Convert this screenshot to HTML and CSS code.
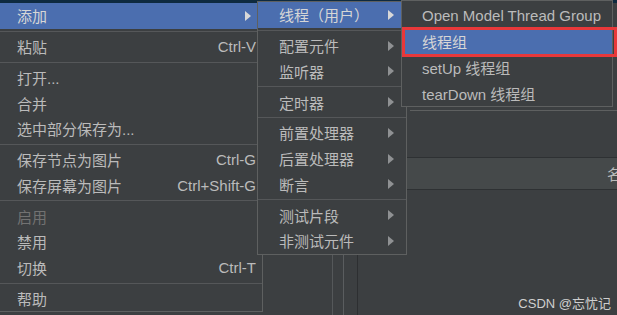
FILE: index.html
```html
<!DOCTYPE html>
<html lang="zh-CN">
<head>
    <meta charset="UTF-8">
    <title>JMeter 右键菜单</title>
    <link rel="stylesheet" href="styles.css">
</head>
<body>
    <div class="desktop">
        <div class="title-strip"><span>Test Plan</span></div>
        <div class="panes">
            <div class="tree-pane"></div>
            <div class="divider"></div>
            <div class="gutter"></div>
            <div class="editor">
                <div class="form-box"></div>
                <div class="name-band"><span>名称：</span></div>
            </div>
        </div>

        <!-- main context menu -->
        <div class="menu menu-main">
            <div class="item active"><span class="label">添加</span><span class="arrow"></span></div>
            <div class="sep"></div>
            <div class="item"><span class="label">粘贴</span><span class="shortcut">Ctrl-V</span></div>
            <div class="sep"></div>
            <div class="item"><span class="label">打开...</span></div>
            <div class="item"><span class="label">合并</span></div>
            <div class="item"><span class="label">选中部分保存为...</span></div>
            <div class="sep"></div>
            <div class="item"><span class="label">保存节点为图片</span><span class="shortcut">Ctrl-G</span></div>
            <div class="item"><span class="label">保存屏幕为图片</span><span class="shortcut">Ctrl+Shift-G</span></div>
            <div class="sep"></div>
            <div class="item disabled"><span class="label">启用</span></div>
            <div class="item"><span class="label">禁用</span></div>
            <div class="item"><span class="label">切换</span><span class="shortcut">Ctrl-T</span></div>
            <div class="sep"></div>
            <div class="item"><span class="label">帮助</span></div>
        </div>

        <!-- add submenu -->
        <div class="menu menu-add">
            <div class="item active"><span class="label">线程（用户）</span><span class="arrow"></span></div>
            <div class="sep"></div>
            <div class="item"><span class="label">配置元件</span><span class="arrow"></span></div>
            <div class="item"><span class="label">监听器</span><span class="arrow"></span></div>
            <div class="sep"></div>
            <div class="item"><span class="label">定时器</span><span class="arrow"></span></div>
            <div class="sep"></div>
            <div class="item"><span class="label">前置处理器</span><span class="arrow"></span></div>
            <div class="item"><span class="label">后置处理器</span><span class="arrow"></span></div>
            <div class="item"><span class="label">断言</span><span class="arrow"></span></div>
            <div class="sep"></div>
            <div class="item"><span class="label">测试片段</span><span class="arrow"></span></div>
            <div class="item"><span class="label">非测试元件</span><span class="arrow"></span></div>
        </div>

        <!-- threads submenu -->
        <div class="menu menu-threads">
            <div class="item"><span class="label">Open Model Thread Group</span></div>
            <div class="item active"><span class="label">线程组</span></div>
            <div class="item"><span class="label">setUp 线程组</span></div>
            <div class="item"><span class="label">tearDown 线程组</span></div>
        </div>

        <div class="mark-box"></div>
        <div class="watermark">CSDN @忘忧记</div>
    </div>
</body>
</html>
```

FILE: styles.css
```css
body {
    margin: 0;
    background-color: #3c3f41;
    font-family: "Liberation Sans", "Noto Sans CJK SC", sans-serif;
    font-size: 15px;
    color: #bbbbbb;
}
.desktop {
    position: relative;
    width: 617px;
    height: 315px;
    overflow: hidden;
    background-color: #3c3f41;
}
.title-strip {
    height: 3px;
    overflow: hidden;
    background-color: #0e2a3f;
}
.title-strip span {
    display: block;
    margin: -12px 0 0 -13px;
    font-size: 13px;
    line-height: 15px;
    color: #c9c9c9;
}
.panes {
    display: flex;
    height: 312px;
}
.tree-pane {
    flex: none;
    width: 332px;
    border-right: 1px solid #55585a;
}
.divider {
    flex: none;
    width: 10px;
    border-right: 1px solid #5a5d5f;
}
.gutter {
    flex: none;
    width: 13px;
    border-right: 1px solid #2d2f31;
}
.editor {
    flex: 1;
    min-width: 0;
    display: flex;
    flex-direction: column;
}
.form-box {
    margin: 107px 0 0 52px;
    border-top: 1px solid #5e6060;
}
.name-band {
    margin-top: 46px;
    height: 31px;
    padding-left: 249px;
    display: flex;
    align-items: center;
    overflow: hidden;
    white-space: nowrap;
    background-color: #45494a;
    border-top: 1px solid #2e3133;
    border-bottom: 1px solid #2e3133;
}
.name-band span {
    flex: none;
}

/* popup menus */
.menu {
    position: absolute;
    box-sizing: border-box;
    display: flex;
    flex-direction: column;
    background-color: #3c3f41;
    border: 1px solid #5e6060;
}
.item {
    display: flex;
    align-items: center;
    height: 25.75px;
    white-space: nowrap;
}
.item .label {
    flex: 1;
}
.item.active {
    background-color: #4b6eaf;
    color: #d6d6d6;
}
.item.disabled {
    color: #727272;
}
.shortcut {
    color: #bbbbbb;
}
.arrow {
    width: 0;
    height: 0;
    border-left: 6px solid #8f9193;
    border-top: 5px solid transparent;
    border-bottom: 5px solid transparent;
}
.item.active .arrow {
    border-left-color: #d8d8d8;
}
.sep {
    height: 5px;
    display: flex;
    align-items: center;
}
.sep::before {
    content: "";
    flex: 1;
    height: 1px;
    background-color: #555759;
}

.menu-main {
    left: -1px;
    top: 3px;
    width: 264px;
    border-top: none;
}
.menu-main .item {
    padding: 0 6px 0 17px;
}
.menu-main .arrow {
    margin-right: 5px;
}
.menu-add {
    left: 257px;
    top: 1px;
    width: 150px;
}
.menu-add .item {
    padding: 0 12px 0 21px;
}
.menu-threads {
    left: 401px;
    top: 0;
    width: 212px;
    padding-top: 1px;
}
.menu-threads .item {
    height: 26px;
    padding: 0 12px 0 20px;
}

.mark-box {
    position: absolute;
    left: 402px;
    top: 27px;
    width: 215px;
    height: 30px;
    box-sizing: border-box;
    border: 3px solid #e8383a;
}
.watermark {
    position: absolute;
    right: 6px;
    bottom: 3px;
    font-size: 13px;
    color: #cfcfcf;
}
```
